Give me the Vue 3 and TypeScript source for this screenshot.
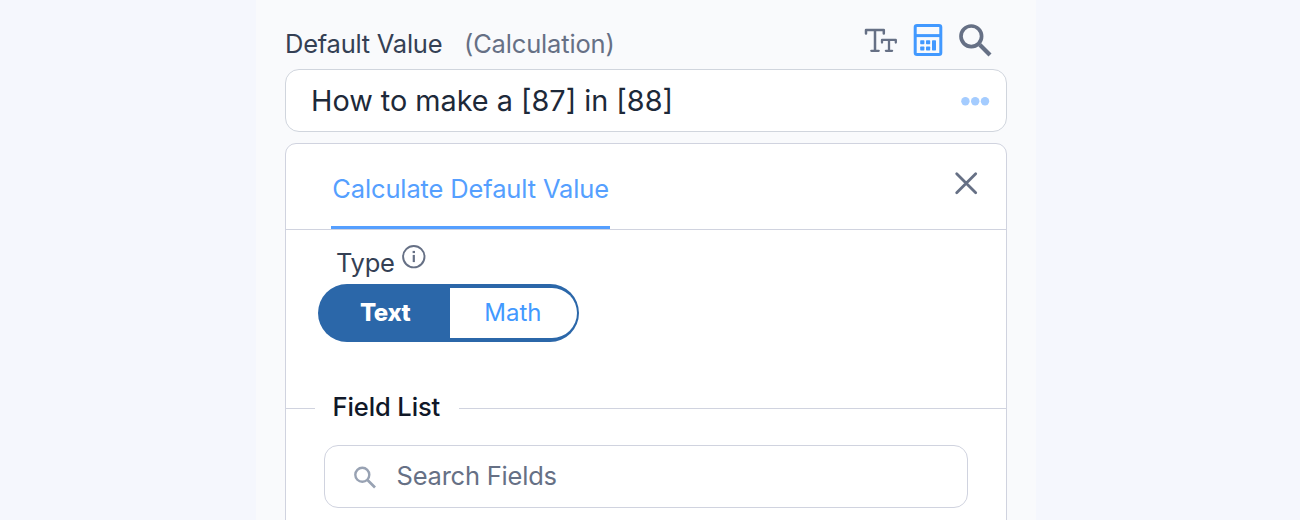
<script setup lang="ts">
import { ref } from 'vue'

type CalcType = 'Text' | 'Math'

const types: CalcType[] = ['Text', 'Math']
const selected = ref<CalcType>('Text')
const formula = 'How to make a [87] in [88]'
</script>

<template>
  <main class="page">
    <section class="panel">
      <header class="head">
        <span class="label">Default Value</span>
        <span class="mode">(Calculation)</span>
        <div class="tools">
          <svg class="tt" width="34" height="26" viewBox="0 0 34 26" fill="none" stroke="#667085">
            <path d="M2 5.6V2H19.8V5.6M11 2V22.6" stroke-width="2.5" stroke-linecap="round" stroke-linejoin="round" />
            <path d="M7.3 22.8H14.7" stroke-width="2.3" stroke-linecap="round" />
            <path d="M18 14.6V11.9H31.8V14.6M25 11.9V22.6M21.9 22.8H28.1" stroke-width="2.3" stroke-linecap="round" stroke-linejoin="round" />
          </svg>
          <svg class="calc" width="30" height="32" viewBox="0 0 30 32">
            <rect x="2.2" y="1.5" width="25.6" height="29" rx="1.8" fill="none" stroke="#4299ff" stroke-width="3" />
            <path d="M1.5 11.6H28.5" stroke="#4299ff" stroke-width="3" />
            <g fill="#4299ff">
              <rect x="7.2" y="16.3" width="4.2" height="4" rx=".7" />
              <rect x="13" y="16.3" width="4.2" height="4" rx=".7" />
              <rect x="7.2" y="22.5" width="4.2" height="4" rx=".7" />
              <rect x="13" y="22.5" width="4.2" height="4" rx=".7" />
              <rect x="19" y="16.3" width="4" height="10.2" rx=".7" />
            </g>
          </svg>
          <svg class="find" width="34" height="34" viewBox="0 0 34 34" fill="none" stroke="#667085">
            <circle cx="13.3" cy="13.3" r="10.3" stroke-width="3.7" />
            <path d="M21.8 21.8L32 32" stroke-width="4.2" />
          </svg>
        </div>
      </header>

      <div class="formula">
        <span>{{ formula }}</span>
        <svg width="30" height="10" viewBox="0 0 30 10" fill="#a4ccff">
          <circle cx="5.4" cy="5.2" r="4.2" />
          <circle cx="15.2" cy="5.2" r="4.2" />
          <circle cx="25" cy="5.2" r="4.2" />
        </svg>
      </div>

      <div class="card">
        <div class="tabs">
          <div class="tab">Calculate Default Value</div>
          <svg class="close" width="24" height="24" viewBox="0 0 24 24" fill="none" stroke="#667085" stroke-width="2.8" stroke-linecap="round">
            <path d="M2.7 2.7L21.7 21.7M21.7 2.7L2.7 21.7" />
          </svg>
        </div>
        <div class="type">
          <span>Type</span>
          <svg width="24" height="24" viewBox="0 0 24 24" fill="none" stroke="#667085">
            <circle cx="11.8" cy="11.7" r="10.7" stroke-width="1.9" />
            <path d="M11.8 9.9V17.1" stroke-width="2.2" />
            <path d="M11.8 5.9V8.1" stroke-width="2.4" />
          </svg>
        </div>
        <div class="toggle">
          <button
            v-for="t in types"
            :key="t"
            type="button"
            :class="{ on: selected === t }"
            @click="selected = t"
          >{{ t }}</button>
        </div>
        <div class="divider"><span>Field List</span></div>
        <div class="search">
          <svg width="24" height="24" viewBox="0 0 24 24" fill="none" stroke="#98a2b3">
            <circle cx="9.3" cy="9.8" r="7" stroke-width="2.4" />
            <path d="M14.5 15L22 22.5" stroke-width="2.7" />
          </svg>
          <span>Search Fields</span>
        </div>
      </div>
    </section>
  </main>
</template>

<style>
body {
  background: #f5f7fd;
  overflow: hidden;
}
</style>

<style scoped>
.page {
  height: 520px;
  overflow: hidden;
  background: #f5f7fd;
  font-family: Inter, "Liberation Sans", sans-serif;
  color: #344054;
  font-size: 25.5px;
  white-space: nowrap;
}
.panel {
  box-sizing: border-box;
  width: 780px;
  height: 520px;
  margin-left: 256px;
  padding: 0 29px;
  background: #f9fafc;
}
.head {
  display: flex;
  height: 69px;
  line-height: 30px;
}
.label {
  margin-top: 29px;
  width: 179px;
  letter-spacing: -0.25px;
}
.mode {
  margin-top: 29px;
  color: #667085;
  letter-spacing: -0.16px;
}
.tools {
  display: flex;
  align-items: flex-start;
  margin-left: auto;
  margin-right: 15px;
}
.tt {
  margin-top: 28px;
}
.calc {
  margin: 24px 0 0 15px;
}
.find {
  margin: 23px 0 0 15px;
}
.formula {
  box-sizing: border-box;
  display: flex;
  align-items: center;
  justify-content: space-between;
  height: 63px;
  padding: 0 16px 0 25px;
  border: 1px solid #d0d5dd;
  border-radius: 14px;
  background: #fff;
  color: #1d2939;
  font-size: 28.8px;
}
.card {
  box-sizing: border-box;
  height: 400px;
  margin-top: 11px;
  border: 1px solid #d0d3df;
  border-radius: 11px;
  background: #fff;
}
.tabs {
  box-sizing: border-box;
  display: flex;
  justify-content: space-between;
  height: 86px;
  padding: 0 28px 0 45px;
  border-bottom: 1px solid #d0d3df;
}
.tab {
  box-sizing: border-box;
  width: 279px;
  height: 85px;
  padding: 30px 0 0 1.3px;
  line-height: 30px;
  border-bottom: 3px solid #559fff;
  color: #559fff;
  letter-spacing: -0.14px;
}
.close {
  margin-top: 27px;
}
.type {
  display: flex;
  height: 54px;
  padding-left: 50px;
  line-height: 30px;
}
.type span {
  width: 66px;
  margin-top: 18px;
  letter-spacing: -0.25px;
}
.type svg {
  margin-top: 15px;
}
.toggle {
  box-sizing: border-box;
  display: flex;
  width: 261px;
  height: 57.5px;
  margin-left: 32.3px;
  padding: 4px 2.5px 3.5px 3px;
  border-radius: 29px;
  background: #2b67a9;
}
.toggle button {
  flex: 1;
  padding: 0 1px 2px 0;
  border: 0;
  border-radius: 0 26px 26px 0;
  background: #fff;
  color: #4299ff;
  font: 400 24px Inter, sans-serif;
}
.toggle button.on {
  flex: 0 0 128.7px;
  border-radius: 26px 0 0 26px;
  background: transparent;
  color: #fff;
  font-weight: 800;
  letter-spacing: -0.4px;
}
.divider {
  display: flex;
  align-items: center;
  height: 30px;
  margin-top: 51.5px;
  color: #101828;
  font-weight: 500;
}
.divider::before,
.divider::after {
  content: "";
  height: 1px;
  background: #d0d3df;
}
.divider::before {
  width: 29px;
}
.divider::after {
  flex: 1;
}
.divider span {
  box-sizing: border-box;
  width: 144px;
  padding: 0 0 3px 17.5px;
  letter-spacing: -0.1px;
}
.search {
  box-sizing: border-box;
  display: flex;
  align-items: center;
  width: 644px;
  height: 63px;
  margin: 22px 0 0 38px;
  padding-left: 28px;
  border: 1px solid #d0d3df;
  border-radius: 14px;
  color: #667085;
}
.search span {
  margin-left: 19.5px;
  padding-bottom: 2px;
  letter-spacing: -0.22px;
}
</style>
